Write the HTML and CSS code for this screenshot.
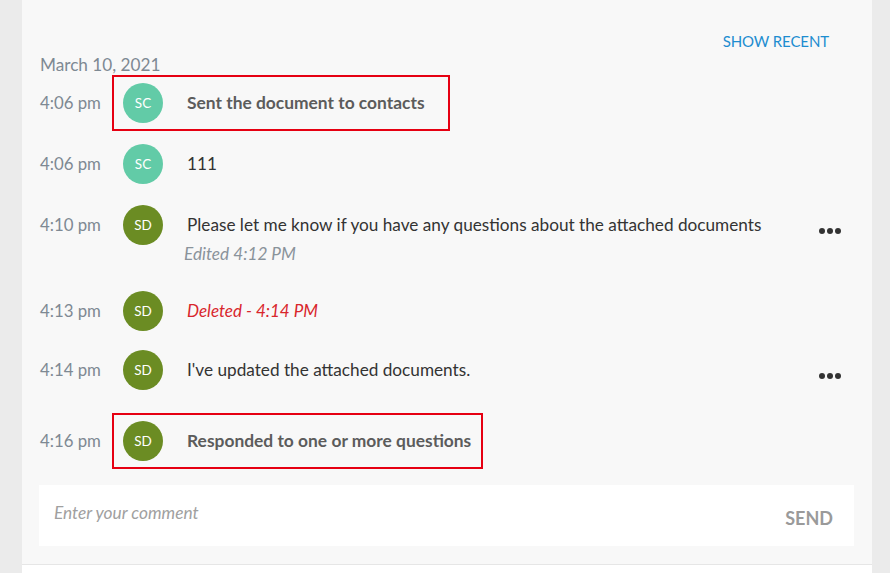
FILE: index.html
```html
<!DOCTYPE html>
<html>
<head>
<meta charset="utf-8">
<link rel="stylesheet" href="styles.css">
</head>
<body>
<div class="panel">
  <div class="top-bar"><a class="show-recent">SHOW RECENT</a></div>
  <div class="date">March 10, 2021</div>
  <div class="feed">
    <div class="row r1">
      <div class="time">4:06 pm</div>
      <div class="body hl">
        <div class="avatar sc">SC</div>
        <div class="msg"><div class="line bold">Sent the document to contacts</div></div>
      </div>
    </div>
    <div class="row r2">
      <div class="time">4:06 pm</div>
      <div class="body">
        <div class="avatar sc">SC</div>
        <div class="msg"><div class="line">111</div></div>
      </div>
    </div>
    <div class="row r3">
      <div class="time">4:10 pm</div>
      <div class="body">
        <div class="avatar sd">SD</div>
        <div class="msg">
          <div class="line">Please let me know if you have any questions about the attached documents</div>
          <div class="edited">Edited 4:12 PM</div>
        </div>
      </div>
      <div class="more"><span></span><span></span><span></span></div>
    </div>
    <div class="row r4">
      <div class="time">4:13 pm</div>
      <div class="body">
        <div class="avatar sd">SD</div>
        <div class="msg"><div class="line deleted">Deleted - 4:14 PM</div></div>
      </div>
    </div>
    <div class="row r5">
      <div class="time">4:14 pm</div>
      <div class="body">
        <div class="avatar sd">SD</div>
        <div class="msg"><div class="line">I've updated the attached documents.</div></div>
      </div>
      <div class="more"><span></span><span></span><span></span></div>
    </div>
    <div class="row r6">
      <div class="time">4:16 pm</div>
      <div class="body hl tight">
        <div class="avatar sd">SD</div>
        <div class="msg"><div class="line bold">Responded to one or more questions</div></div>
      </div>
    </div>
  </div>
  <div class="composer">
    <div class="placeholder">Enter your comment</div>
    <div class="send">SEND</div>
  </div>
</div>
<div class="footer"></div>
</body>
</html>
```
FILE: styles.css
```css
html, body {
  margin: 0;
  padding: 0;
}
body {
  background: #ebebeb;
  font-family: Lato, "Open Sans", sans-serif;
  height: 573px;
  overflow: hidden;
}
.panel {
  margin-left: 22px;
  width: 850px;
  box-sizing: border-box;
  background: #f8f8f8;
  padding: 0 18px 18px 17px;
  border-bottom: 1px solid #e6e6e6;
}
.footer {
  margin-left: 22px;
  width: 850px;
  height: 20px;
  background: #fff;
}
.top-bar {
  display: flex;
  justify-content: flex-end;
  padding-top: 31px;
  height: 20px;
}
.show-recent {
  color: #1d8dd0;
  font-size: 15px;
  line-height: 20px;
  margin-right: 25px;
  letter-spacing: -0.1px;
}
.date {
  margin-top: 4px;
  padding-left: 1px;
  height: 20px;
  line-height: 20px;
  font-size: 17.2px;
  color: #7e8993;
}
.row {
  display: flex;
  align-items: flex-start;
  padding-left: 1px;
  padding-right: 13px;
}
.r2, .r3 { margin-top: 5px; }
.r4 { margin-top: 12px; }
.r5 { margin-top: 3px; }
.r6 { margin-top: 15px; }
.time {
  width: 72px;
  flex: none;
  height: 56px;
  line-height: 56px;
  font-size: 16.8px;
  color: #7e8993;
}
.body {
  display: flex;
  align-items: flex-start;
  border: 2px solid transparent;
  padding: 6px 23px 6px 9px;
}
.body.hl {
  border-color: #e60012;
}
.body.tight {
  padding-right: 10px;
}
.avatar {
  width: 40px;
  height: 40px;
  border-radius: 50%;
  flex: none;
  color: #fff;
  font-size: 13.5px;
  line-height: 40px;
  text-align: center;
}
.avatar.sc { background: #62cba7; }
.avatar.sd { background: #6b8c23; }
.msg {
  margin-left: 24px;
}
.line {
  line-height: 40px;
  font-size: 17.2px;
  color: #333;
  white-space: nowrap;
}
.line.bold {
  font-weight: 700;
  font-size: 17.4px;
  color: #5c5c5c;
}
.line.deleted {
  font-style: italic;
  font-size: 17px;
  color: #d8262c;
}
.edited {
  margin-left: -3px;
  line-height: 18px;
  font-size: 17.2px;
  font-style: italic;
  color: #8a939b;
}
.more {
  margin-left: auto;
  display: flex;
  gap: 2px;
  padding-top: 31px;
}
.more span {
  width: 6px;
  height: 6px;
  border-radius: 50%;
  background: #333;
}
.composer {
  margin-top: 16px;
  background: #fff;
  height: 61px;
  display: flex;
  align-items: flex-start;
  justify-content: space-between;
  padding: 0 21px 0 15px;
}
.placeholder {
  margin-top: 18px;
  line-height: 20px;
  font-size: 17.3px;
  font-style: italic;
  color: #a0a0a0;
}
.send {
  margin-top: 22px;
  line-height: 22px;
  font-size: 18px;
  font-weight: 700;
  color: #9a9a9a;
}
```
